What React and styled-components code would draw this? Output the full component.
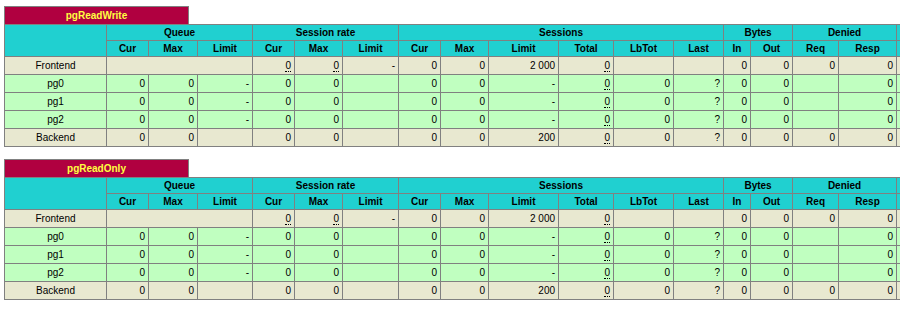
import React from "react";
import styled, { createGlobalStyle } from "styled-components";

const GlobalStyle = createGlobalStyle`
  html, body {
    margin: 0;
    padding: 0;
    background: #ffffff;
    color: #000000;
    font-family: "Liberation Sans", Arial, Helvetica, sans-serif;
    font-size: 12px;
    overflow: hidden;
  }
`;

const Page = styled.div`
  width: 900px;
  overflow: hidden;
  padding: 6px 0 0 4px;
  box-sizing: border-box;
`;

const Section = styled.section`
  display: flex;
  flex-direction: column;
  margin-bottom: 12px;
`;

const ProxyName = styled.div`
  box-sizing: border-box;
  width: 185px;
  height: 18px;
  padding: 2px 3px;
  border: 1px solid gray;
  border-bottom: none;
  background: #b00040;
  color: #ffff40;
  font-weight: bold;
  font-size: 10px;
  line-height: 13px;
  text-align: center;
  white-space: nowrap;
`;

const StatsTable = styled.table`
  border-collapse: collapse;
  border-style: none;
  table-layout: fixed;
  width: ${(p) => p.$width}px;
`;

const HeadCell = styled.th`
  border: 1px solid gray;
  padding: 1px 3px;
  height: 13px;
  background: #20d0d0;
  color: #000000;
  font-weight: bold;
  text-align: center;
  font-size: 10px;
  line-height: 13px;
  white-space: nowrap;
  overflow: hidden;
`;

const Row = styled.tr`
  background: ${(p) => (p.$kind === "server" ? "#c0ffc0" : "#e8e8d0")};
`;

const Cell = styled.td`
  border: 1px solid gray;
  padding: 2px 3px;
  height: 13px;
  text-align: ${(p) => (p.$center ? "center" : "right")};
  font-size: 10px;
  line-height: 13px;
  white-space: nowrap;
  overflow: hidden;
  color: #000000;
`;

const Dotted = styled.u`
  text-decoration: none;
  border-bottom: 1px dotted black;
`;

/* last entry: the next column group, which runs past the window's edge */
const colWidths = [
  102, 42, 49, 55, 42, 48, 56, 42, 48, 70, 55, 60, 50, 27, 42, 46, 58, 40,
];
const tableWidth = colWidths.reduce((a, b) => a + b, 0);

const groups = [
  ["Queue", 3],
  ["Session rate", 3],
  ["Sessions", 6],
  ["Bytes", 2],
  ["Denied", 2],
  ["", 1],
];

const subHeads = [
  "Cur", "Max", "Limit",
  "Cur", "Max", "Limit",
  "Cur", "Max", "Limit", "Total", "LbTot", "Last",
  "In", "Out",
  "Req", "Resp",
  "",
];

const U = (v) => ({ v, u: true });

const frontendRow = [
  { v: "", span: 3 },
  U("0"), U("0"), "-",
  "0", "0", "2 000", U("0"), "", "",
  "0", "0",
  "0", "0",
  "",
];

const serverRow = [
  "0", "0", "-",
  "0", "0", "",
  "0", "0", "-", U("0"), "0", "?",
  "0", "0",
  "", "0",
  "",
];

const backendRow = [
  "0", "0", "",
  "0", "0", "",
  "0", "0", "200", U("0"), "0", "?",
  "0", "0",
  "0", "0",
  "",
];

const rows = [
  { name: "Frontend", kind: "frontend", cells: frontendRow },
  { name: "pg0", kind: "server", cells: serverRow },
  { name: "pg1", kind: "server", cells: serverRow },
  { name: "pg2", kind: "server", cells: serverRow },
  { name: "Backend", kind: "backend", cells: backendRow },
];

function renderCell(c, i) {
  const cell = typeof c === "string" ? { v: c } : c;
  return (
    <Cell key={i} colSpan={cell.span || 1}>
      {cell.u ? <Dotted>{cell.v}</Dotted> : cell.v}
    </Cell>
  );
}

function ProxyStats({ name }) {
  return (
    <Section>
      <ProxyName>{name}</ProxyName>
      <StatsTable $width={tableWidth}>
        <colgroup>
          {colWidths.map((w, i) => (
            <col key={i} style={{ width: w }} />
          ))}
        </colgroup>
        <thead>
          <tr>
            <HeadCell rowSpan={2}></HeadCell>
            {groups.map(([g, n], i) => (
              <HeadCell key={i} colSpan={n}>
                {g}
              </HeadCell>
            ))}
          </tr>
          <tr>
            {subHeads.map((h, i) => (
              <HeadCell key={i}>{h}</HeadCell>
            ))}
          </tr>
        </thead>
        <tbody>
          {rows.map((r) => (
            <Row key={r.name} $kind={r.kind}>
              <Cell $center>{r.name}</Cell>
              {r.cells.map(renderCell)}
            </Row>
          ))}
        </tbody>
      </StatsTable>
    </Section>
  );
}

export default function App() {
  return (
    <>
      <GlobalStyle />
      <Page>
        <ProxyStats name="pgReadWrite" />
        <ProxyStats name="pgReadOnly" />
      </Page>
    </>
  );
}
